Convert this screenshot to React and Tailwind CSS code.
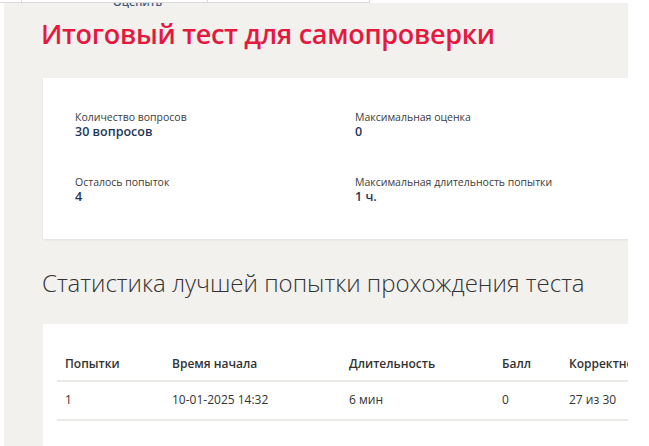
const info = [
  [
    { label: 'Количество вопросов', value: '30 вопросов' },
    { label: 'Максимальная оценка', value: '0' },
  ],
  [
    { label: 'Осталось попыток', value: '4' },
    { label: 'Максимальная длительность попытки', value: '1 ч.' },
  ],
];

const columns = [
  { title: 'Попытки', w: 'w-[107px]' },
  { title: 'Время начала', w: 'w-[177px]' },
  { title: 'Длительность', w: 'w-[153px]' },
  { title: 'Балл', w: 'w-[67px]' },
  { title: 'Корректность', w: 'w-[120px]' },
];

const row = ['1', '10-01-2025 14:32', '6 мин', '0', '27 из 30'];

function InfoItem({ label, value }) {
  return (
    <div className="w-[280px]">
      <div className="text-[10.5px] leading-[13px] text-[#3c3c3c]">{label}</div>
      <div className="text-[12.5px] leading-[15px] font-semibold text-[#1f3656]">{value}</div>
    </div>
  );
}

export default function App() {
  return (
    <div className="w-[649px] h-[446px] bg-white overflow-hidden font-['Open_Sans',sans-serif]">
      {/* cut-off table row above */}
      <div className="flex h-[3px] w-[370px] border-b border-[#d9d9d9] bg-white">
        <div className="w-[23px] border-r border-[#d9d9d9]" />
        <div className="w-[193px] border-r border-[#d9d9d9]" />
        <div className="w-[169px] border-r border-[#d9d9d9]" />
      </div>

      <div className="ml-[4px] w-[624px] h-[443px] bg-[#f2f1ee] overflow-hidden">
        <div className="relative -mt-[8px] ml-[109px] text-[11px] leading-[14px] font-semibold text-[#3d5a80]">
          Оценить
        </div>

        <h1 className="mt-[9px] ml-[37px] text-[27px] leading-[32px] font-semibold text-[#e3193f] tracking-[-0.3px]">
          Итоговый тест для самопроверки
        </h1>

        <div className="mt-[28px] ml-[39px] w-[620px] h-[161px] bg-white shadow-[0_1px_2px_rgba(0,0,0,0.08)] pt-[33px] pl-[32px]">
          <div className="flex flex-col gap-[37px]">
            {info.map((pair, i) => (
              <div key={i} className="flex">
                {pair.map((it) => (
                  <InfoItem key={it.label} {...it} />
                ))}
              </div>
            ))}
          </div>
        </div>

        <h2 className="mt-[28px] ml-[38px] text-[24px] leading-[32px] font-light text-[#333]">
          Статистика лучшей попытки прохождения теста
        </h2>

        <div className="mt-[25px] ml-[39px] w-[620px] h-[140px] bg-white pt-[23px] pl-[14px]">
          <table className="w-[624px] table-fixed border-collapse text-left text-[12px] text-[#333]">
            <thead>
              <tr className="border-b-2 border-[#eceae6]">
                {columns.map((c) => (
                  <th key={c.title} className={`${c.w} px-[8px] h-[34px] font-semibold whitespace-nowrap`}>
                    {c.title}
                  </th>
                ))}
              </tr>
            </thead>
            <tbody>
              <tr className="border-b-2 border-[#eceae6]">
                {row.map((v, i) => (
                  <td key={i} className="px-[8px] pb-[2px] h-[39px] whitespace-nowrap">
                    {v}
                  </td>
                ))}
              </tr>
            </tbody>
          </table>
        </div>
      </div>
    </div>
  );
}
